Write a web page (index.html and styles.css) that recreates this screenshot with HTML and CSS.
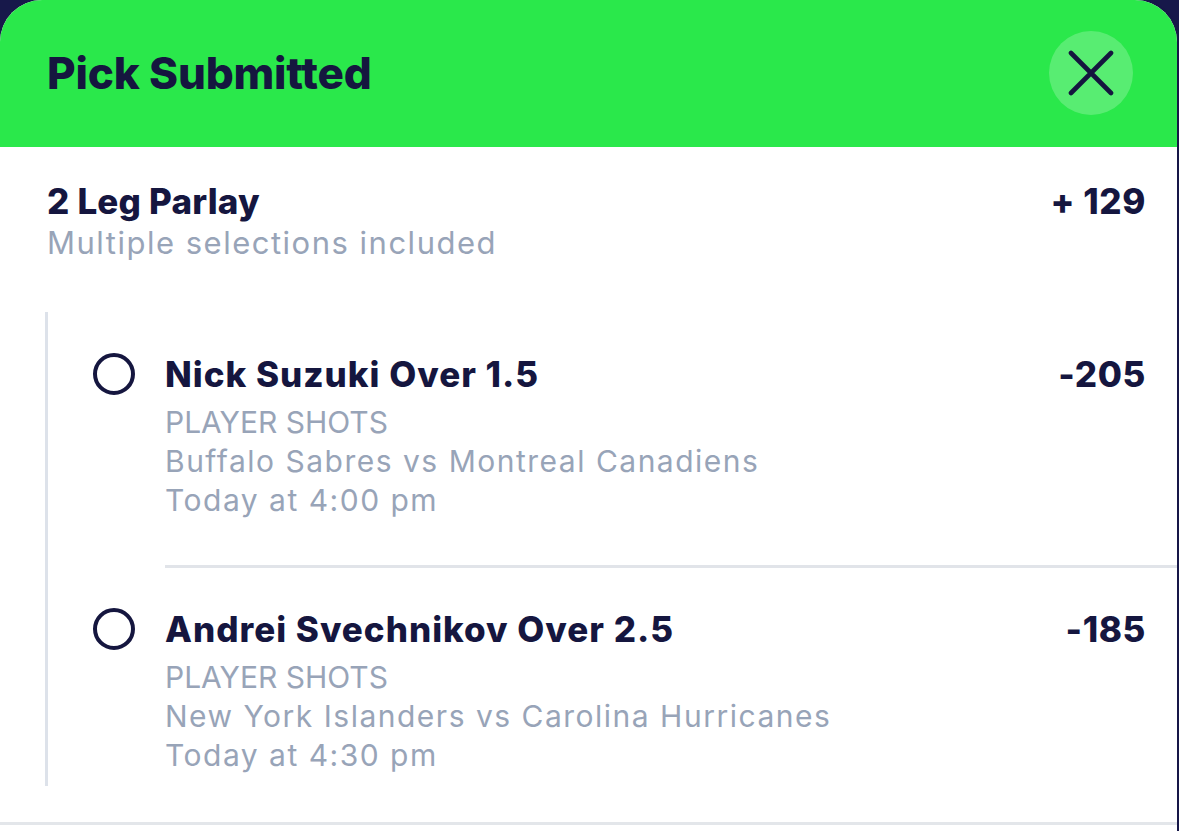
FILE: index.html
```html
<!DOCTYPE html>
<html lang="en">
<head>
<meta charset="utf-8">
<title>Pick Submitted</title>
<link rel="stylesheet" href="styles.css">
</head>
<body>
<div class="sheet">
  <header class="sheet-header">
    <h1 class="title">Pick Submitted</h1>
    <button class="close-btn" aria-label="Close">
      <svg width="46" height="46" viewBox="0 0 46 46"><path d="M3 3 L43 43 M43 3 L3 43" stroke="#15163f" stroke-width="4.6" stroke-linecap="round" fill="none"/></svg>
    </button>
  </header>
  <main class="sheet-body">
    <section class="summary">
      <div class="summary-text">
        <div class="summary-title">2 Leg Parlay</div>
        <div class="summary-sub">Multiple selections included</div>
      </div>
      <div class="odds">+ 129</div>
    </section>
    <section class="legs">
      <div class="leg">
        <span class="leg-dot"></span>
        <div class="leg-main">
          <div class="leg-head">
            <div class="leg-name">Nick Suzuki Over 1.5</div>
            <div class="odds">-205</div>
          </div>
          <div class="leg-line leg-market">PLAYER SHOTS</div>
          <div class="leg-line">Buffalo Sabres vs Montreal Canadiens</div>
          <div class="leg-line">Today at 4:00 pm</div>
        </div>
      </div>
      <div class="leg-divider"></div>
      <div class="leg leg-second">
        <span class="leg-dot"></span>
        <div class="leg-main">
          <div class="leg-head">
            <div class="leg-name">Andrei Svechnikov Over 2.5</div>
            <div class="odds">-185</div>
          </div>
          <div class="leg-line leg-market">PLAYER SHOTS</div>
          <div class="leg-line">New York Islanders vs Carolina Hurricanes</div>
          <div class="leg-line">Today at 4:30 pm</div>
        </div>
      </div>
    </section>
  </main>
  <div class="sheet-footer"></div>
</div>
</body>
</html>
```
FILE: styles.css
```css
* { box-sizing: border-box; }
html, body {
  margin: 0;
  padding: 0;
  background: #17184a;
  height: 831px;
  overflow: hidden;
}
body {
  font-family: "Inter", "Liberation Sans", sans-serif;
  color: #15163f;
}
.sheet {
  width: 1177px;
  height: 831px;
  background: #ffffff;
  border-radius: 42px 42px 0 0;
  overflow: hidden;
  display: flex;
  flex-direction: column;
  box-shadow: 2px 0 3px rgba(0,0,0,0.04);
}
.sheet-header {
  height: 147px;
  background: #2ae84b;
  display: flex;
  align-items: center;
  justify-content: space-between;
  padding: 0 44px 0 47px;
}
.title {
  margin: 0;
  font-size: 44px;
  font-weight: 800;
  letter-spacing: -0.2px;
  line-height: 1;
  margin-top: -2px;
}
.close-btn {
  width: 84px;
  height: 84px;
  border-radius: 50%;
  border: none;
  background: rgba(255,255,255,0.22);
  display: flex;
  align-items: center;
  justify-content: center;
  padding: 0;
  margin-top: -2px;
}
.sheet-body {
  flex: 1;
  padding: 0 31px 0 45px;
}
.summary {
  display: flex;
  justify-content: space-between;
  align-items: flex-start;
  padding: 30px 0 0 2px;
}
.summary-title {
  font-size: 35px;
  font-weight: 800;
  line-height: 48px;
  letter-spacing: 0.2px;
}
.summary-sub {
  font-size: 31px;
  line-height: 36px;
  color: #98a4b8;
  letter-spacing: 1.5px;
}
.odds {
  font-size: 35px;
  font-weight: 800;
  line-height: 48px;
  letter-spacing: 0.6px;
}
.legs {
  margin-top: 51px;
  border-left: 3px solid #dde2ea;
  padding-bottom: 11px;
}
.leg {
  display: flex;
  align-items: flex-start;
  padding-top: 38px;
}
.leg-second { padding-top: 37px; }
.leg-dot {
  flex: none;
  width: 42px;
  height: 42px;
  border: 4px solid #15163f;
  border-radius: 50%;
  margin: 3px 30px 0 45px;
}
.leg-main {
  flex: 1;
}
.leg-head {
  display: flex;
  justify-content: space-between;
  align-items: flex-start;
  margin-bottom: 5px;
}
.leg-name {
  font-size: 35px;
  font-weight: 800;
  line-height: 48px;
  letter-spacing: 1px;
}
.leg-line {
  font-size: 30px;
  line-height: 39px;
  color: #98a4b8;
  letter-spacing: 1.5px;
}
.leg-market {
  letter-spacing: 0;
}
.leg-divider {
  height: 3px;
  background: #e1e4e9;
  margin: 45px -31px 0 117px;
}
.sheet-footer {
  height: 3px;
  background: #e3e6ea;
  margin-bottom: 6px;
}
```
